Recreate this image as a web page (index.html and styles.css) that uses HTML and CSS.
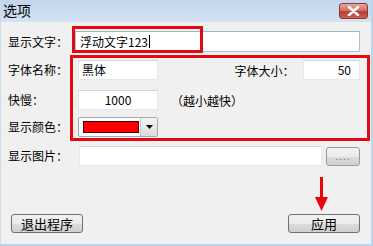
FILE: index.html
```html
<!DOCTYPE html>
<html>
<head>
<meta charset="utf-8">
<link rel="stylesheet" href="styles.css">
</head>
<body>
<div class="window">
  <div class="titlebar">
    <span class="title">选项</span>
    <span class="close"><svg width="13" height="10" viewBox="0 0 13 10"><path d="M2 1 L11 9 M11 1 L2 9" stroke="#fff" stroke-width="2.6" stroke-linecap="round"/></svg></span>
  </div>
  <div class="client">
    <div class="row r1">
      <span class="label">显示文字：</span>
      <div class="input wide">浮动文字123<span class="caret"></span></div>
    </div>
    <div class="row r2">
      <span class="label">字体名称：</span>
      <div class="input small">黑体</div>
      <span class="label2">字体大小：</span>
      <div class="input tiny right">50</div>
    </div>
    <div class="row r3">
      <span class="label">快慢：</span>
      <div class="input small center">1000</div>
      <span class="hint">（越小越快）</span>
    </div>
    <div class="row r4">
      <span class="label">显示颜色：</span>
      <div class="combo"><span class="swatch"></span><span class="drop"><svg width="7" height="4" viewBox="0 0 7 4"><path d="M0 0 H7 L3.5 4 Z" fill="#000"/></svg></span></div>
    </div>
    <div class="row r5">
      <span class="label">显示图片：</span>
      <div class="input path"></div>
      <div class="btn dots">....</div>
    </div>
    <div class="footer">
      <div class="btn big">退出程序</div>
      <div class="btn big">应用</div>
    </div>
  </div>
  <div class="mark m1"></div>
  <div class="mark m2"></div>
  <svg class="arrow" width="13" height="34" viewBox="0 0 13 34"><rect x="5" y="0" width="3" height="22" fill="#e8060a"/><path d="M0 20 H13 L6.5 34 Z" fill="#e8060a"/></svg>
</div>
</body>
</html>
```
FILE: styles.css
```css
* { box-sizing: border-box; }
html, body { margin: 0; padding: 0; }
body {
  font-family: "Noto Sans CJK SC", "Liberation Sans", sans-serif;
  font-size: 12px;
  color: #000;
  background: #f0f0f0;
}
.window {
  position: relative;
  width: 373px;
  height: 246px;
  background: #f0f0f0;
  border-right: 2px solid #bcd3ec;
  border-bottom: 2px solid #bcd3ec;
  border-left: 1px solid #c9dbef;
}
.titlebar {
  height: 22px;
  display: flex;
  align-items: center;
  justify-content: space-between;
  padding: 0 3px 2px 2px;
  background: linear-gradient(#c3d6ec, #d4e2f2);
}
.title { font-size: 14px; line-height: 16px; }
.close {
  width: 29px;
  height: 16px;
  margin-top: 2px;
  border: 1px solid #8a3a36;
  border-radius: 3px;
  background: linear-gradient(#e6a89d, #cf6a5c 50%, #b8392b 55%, #cf6052);
  display: flex;
  align-items: center;
  justify-content: center;
}
.client { padding: 9px 11px 0 7px; }
.row { display: flex; align-items: center; height: 20px; }
.r1 { height: 21px; }
.r2 { margin-top: 8px; }
.r3 { margin-top: 10px; }
.r4 { margin-top: 7px; }
.r5 { margin-top: 9px; }
.label { width: 70px; flex: none; line-height: 14px; }
.input {
  height: 100%;
  background: #fff;
  border: 1px solid #e3e9ef;
  border-top-color: #d0d6de;
  display: flex;
  align-items: center;
  padding: 0 3px;
  line-height: 14px;
}
.wide { flex: 1; border-color: #abc0d4; border-top-color: #a3b4c8; margin-left: -3px; padding-left: 4px; }
.caret { display: inline-block; width: 1px; height: 13px; background: #000; margin-left: 1px; }
.small { width: 80px; }
.center { justify-content: center; }
.right { justify-content: flex-end; padding-right: 8px; }
.label2 { margin-left: 77px; width: 70px; }
.tiny { width: 57px; margin-left: -1px; }
.hint { margin-left: 13px; }
.combo {
  width: 80px;
  height: 20px;
  border: 1px solid #a8a8a8;
  border-radius: 2px;
  background: #fff;
  display: flex;
  align-items: center;
  padding-left: 4px;
}
.swatch { width: 56px; height: 12px; background: #ff0000; border: 1px solid #400; }
.drop {
  margin-left: auto;
  width: 17px;
  height: 18px;
  border-left: 1px solid #c8c8c8;
  background: linear-gradient(#f4f4f4, #dcdcdc);
  display: flex;
  align-items: center;
  justify-content: center;
}
.path { width: 243px; margin-left: 1px; }
.btn {
  border: 1px solid #707070;
  border-radius: 3px;
  background: linear-gradient(#f2f2f2 0%, #ebebeb 50%, #dddddd 51%, #cfcfcf 100%);
  display: flex;
  align-items: center;
  justify-content: center;
  line-height: 14px;
}
.dots { width: 34px; height: 19px; margin-left: 4px; color: #777; font-size: 10px; letter-spacing: 1px; border-color: #9a9a9a; }
.footer {
  margin-top: 48px;
  display: flex;
  justify-content: space-between;
  padding: 0 0 0 3px;
}
.big { width: 72px; height: 19px; font-size: 13px; }
.mark { position: absolute; border: 3px solid #e10a12; }
.m1 { left: 71px; top: 26px; width: 131px; height: 27px; }
.m2 { left: 69px; top: 55px; width: 300px; height: 86px; }
.arrow { position: absolute; left: 314px; top: 177px; }
```
